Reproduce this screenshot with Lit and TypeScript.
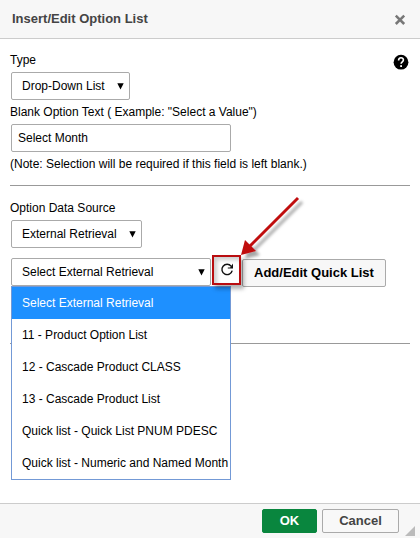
import { LitElement, html, css } from "lit";
import { customElement, state } from "lit/decorators.js";
import { classMap } from "lit/directives/class-map.js";

const RETRIEVALS = [
  "Select External Retrieval",
  "11 - Product Option List",
  "12 - Cascade Product CLASS",
  "13 - Cascade Product List",
  "Quick list - Quick List PNUM PDESC",
  "Quick list - Numeric and Named Month",
];

@customElement("app-root")
export class AppRoot extends LitElement {
  @state() private selected = 0;

  static styles = css`
    :host {
      display: flex;
      flex-direction: column;
      min-height: 100vh;
      background: #fff;
      color: #000;
      font: 12px/16px "Liberation Sans", Arial, sans-serif;
    }
    * {
      box-sizing: border-box;
    }
    button,
    input,
    select {
      font: inherit;
      color: inherit;
      margin: 0;
    }
    svg {
      display: block;
    }
    header {
      display: flex;
      align-items: center;
      justify-content: space-between;
      height: 39px;
      padding: 0 14px 0 12px;
      background: #f7f7f7;
      border-bottom: 1px solid #ccc;
    }
    h1 {
      margin: 0;
      font-size: 13px;
      font-weight: bold;
      color: #444;
    }
    .icon-button {
      display: block;
      padding: 0;
      border: 0;
      background: none;
      cursor: pointer;
    }
    main {
      flex: 1;
      padding: 13px 10px 0;
    }
    .top {
      display: flex;
      justify-content: space-between;
      align-items: flex-start;
    }
    .help {
      margin-top: 2px;
    }
    .field {
      display: flex;
      flex-direction: column;
      align-items: flex-start;
    }
    .field label {
      padding-bottom: 4px;
    }
    .blank {
      padding-top: 4px;
    }
    .note {
      margin: 4px 0 0;
    }
    .pick {
      position: relative;
      display: block;
      margin-left: 1px;
    }
    .pick svg {
      position: absolute;
      right: 6px;
      top: 11px;
      pointer-events: none;
    }
    select,
    input {
      display: block;
      height: 28px;
      border: 1px solid #aaa;
      border-radius: 2px;
      background: #fff;
    }
    select {
      appearance: none;
      padding: 0 24px 0 10px;
    }
    input {
      width: 220px;
      margin-left: 1px;
      padding: 0 6px;
    }
    hr {
      height: 1px;
      margin: 0;
      border: 0;
      background: #999;
    }
    .first-rule {
      margin: 13px 0 14px;
    }
    .row {
      display: flex;
      align-items: flex-start;
      margin: 10px 0 56px;
    }
    .wide,
    .wide select {
      width: 200px;
    }
    .menu {
      position: absolute;
      z-index: 1;
      left: 0;
      top: 28px;
      width: 220px;
      margin: 0;
      padding: 0;
      list-style: none;
      background: #fff;
      border: 1px solid #7399d6;
    }
    .menu li {
      padding: 8px 0 8px 10px;
      white-space: nowrap;
      cursor: default;
    }
    .menu .active {
      background: #1e90ff;
      color: #fff;
    }
    .refresh {
      position: relative;
      z-index: 2;
      width: 29px;
      height: 30px;
      margin: -3px 0 0 1px;
      border: 2px solid #b90d10;
      box-shadow: 3px 4px 4px rgba(0, 0, 0, 0.3), inset 3px 3px 4px rgba(0, 0, 0, 0.2);
    }
    .refresh button {
      display: flex;
      width: 100%;
      height: 100%;
      align-items: center;
      justify-content: center;
    }
    .pointer {
      position: absolute;
      left: 25px;
      bottom: 22px;
      pointer-events: none;
    }
    .quick {
      height: 28px;
      margin: 1px 0 0 1px;
      padding: 0 11px;
      border: 1px solid #aaa;
      border-radius: 2px;
      background: #f7f7f7;
      font-size: 13px;
      font-weight: bold;
    }
    footer {
      display: flex;
      align-items: center;
      justify-content: flex-end;
      gap: 5px;
      height: 35px;
      padding: 0 5px 0 0;
      background: #f7f7f7;
      border-top: 1px solid #ccc;
    }
    footer button {
      height: 24px;
      padding: 0;
      border: 1px solid #aaa;
      border-radius: 2px;
      font-size: 13px;
      font-weight: bold;
    }
    .ok {
      width: 55px;
      background: #09863e;
      border-color: #09863e;
      color: #fff;
    }
    .cancel {
      width: 77px;
      background: #f8f8f8;
      color: #444;
    }
    .grip {
      align-self: flex-end;
      margin-bottom: 2px;
    }
  `;

  private caret() {
    return html`<svg width="7" height="7" viewBox="0 0 7 7" aria-hidden="true">
      <path d="M0.3 0.3H6.7L3.5 6.5Z" fill="#000" />
    </svg>`;
  }

  render() {
    return html`
      <header>
        <h1>Insert/Edit Option List</h1>
        <button class="icon-button" aria-label="Close">
          <svg width="12" height="12" viewBox="0 0 12 12">
            <path d="M1.8 2.6L10.2 11M10.2 2.6L1.8 11" stroke="#777" stroke-width="2.5" />
          </svg>
        </button>
      </header>
      <main>
        <div class="top">
          <div class="field">
            <label for="type">Type</label>
            <span class="pick">
              <select id="type">
                <option>Drop-Down List</option>
              </select>
              ${this.caret()}
            </span>
          </div>
          <button class="icon-button help" aria-label="Help">
            <svg width="18" height="16" viewBox="0 0 18 16">
              <circle cx="9" cy="8.2" r="7.4" fill="#000" />
              <path
                d="M6.6 6.4C6.6 2.8 11.5 3 11.4 6C11.4 7.8 9.1 7.8 9.1 9.8"
                fill="none"
                stroke="#fff"
                stroke-width="1.6"
              />
              <rect x="8.2" y="11.2" width="1.8" height="1.8" fill="#fff" />
            </svg>
          </button>
        </div>
        <div class="field blank">
          <label for="blank">Blank Option Text ( Example: "Select a Value")</label>
          <input id="blank" type="text" value="Select Month" />
        </div>
        <p class="note">(Note: Selection will be required if this field is left blank.)</p>
        <hr class="first-rule" />
        <div class="field">
          <label for="source">Option Data Source</label>
          <span class="pick">
            <select id="source">
              <option>External Retrieval</option>
            </select>
            ${this.caret()}
          </span>
        </div>
        <div class="row">
          <div class="pick wide">
            <select
              aria-label="External retrieval"
              @change=${(e: Event) => (this.selected = (e.target as HTMLSelectElement).selectedIndex)}
            >
              ${RETRIEVALS.map((r, i) => html`<option ?selected=${i === this.selected}>${r}</option>`)}
            </select>
            ${this.caret()}
            <ul class="menu" role="listbox" aria-label="External retrieval">
              ${RETRIEVALS.map(
                (r, i) => html`<li
                  role="option"
                  aria-selected=${i === this.selected}
                  class=${classMap({ active: i === this.selected })}
                  @click=${() => (this.selected = i)}
                >${r}</li>`
              )}
            </ul>
          </div>
          <div class="refresh">
            <button class="icon-button" aria-label="Refresh">
              <svg width="14" height="14" viewBox="0 0 14 14">
                <path d="M11.2 3.2A5.2 5.2 0 1 0 12.2 7.6" fill="none" stroke="#111" stroke-width="1.4" />
                <path d="M13 0.4V5.6H7.8V4.6H10.2Z" fill="#111" />
              </svg>
            </button>
            <svg class="pointer" width="70" height="66" viewBox="0 0 70 66" aria-hidden="true">
              <defs>
                <filter id="shade" x="-20%" y="-20%" width="150%" height="150%">
                  <feDropShadow dx="4" dy="4" stdDeviation="1.6" flood-color="#000" flood-opacity="0.35" />
                </filter>
              </defs>
              <g filter="url(#shade)">
                <path d="M59 3L11 51" stroke="#c00d0f" stroke-width="3" />
                <path d="M2 60L6 45L17 56Z" fill="#c00d0f" />
              </g>
            </svg>
          </div>
          <button class="quick">Add/Edit Quick List</button>
        </div>
        <hr />
      </main>
      <footer>
        <button class="ok">OK</button>
        <button class="cancel">Cancel</button>
        <svg class="grip" width="11" height="11" viewBox="0 0 11 11" aria-hidden="true">
          <path d="M11 1V11H1Z" fill="#bbb" />
        </svg>
      </footer>
    `;
  }
}
